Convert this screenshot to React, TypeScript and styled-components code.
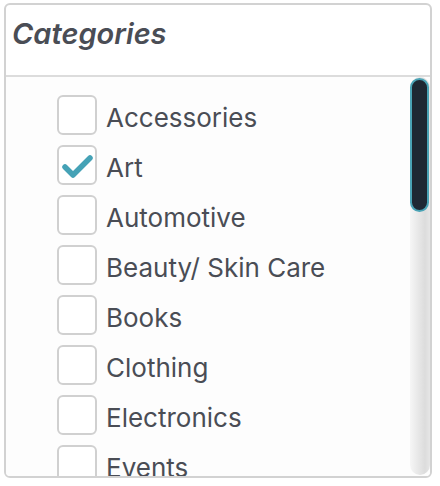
import React, { useState } from 'react';
import styled, { createGlobalStyle } from 'styled-components';

const Global = createGlobalStyle`
  html, body {
    margin: 0;
    padding: 0;
    background: #ffffff;
  }
  body {
    font-family: Inter, "Liberation Sans", sans-serif;
  }
`;

const Panel = styled.div`
  box-sizing: border-box;
  margin: 3px 0 0 4px;
  width: 428px;
  height: 475px;
  border: 2px solid #d2d2d2;
  border-radius: 6px;
  display: flex;
  flex-direction: column;
  overflow: hidden;
  background: #fff;
`;

const Header = styled.div`
  height: 72px;
  flex-shrink: 0;
  border-bottom: 2px solid #dcdcdc;
  padding: 12px 0 0 6px;
  box-sizing: border-box;
`;

const Title = styled.h2`
  margin: 0;
  font-size: 29px;
  font-weight: 600;
  font-style: italic;
  color: #4a4d55;
  line-height: 34px;
`;

const Body = styled.div`
  position: relative;
  flex: 1;
  min-height: 0;
`;

const List = styled.div`
  height: 100%;
  box-sizing: border-box;
  overflow-y: scroll;
  scrollbar-width: none;
  background: #fdfdfd;
  padding: 18px 0 10px 51px;
  display: flex;
  flex-direction: column;
  gap: 10px;

  &::-webkit-scrollbar {
    display: none;
  }
`;

const Track = styled.div`
  position: absolute;
  top: 0;
  right: 0;
  bottom: 1px;
  width: 20px;
  border-radius: 10px;
  background: linear-gradient(to right, #f6f6f6, #dcdcdc 75%, #e6e6e6);
`;

const Thumb = styled.div`
  position: absolute;
  left: 0;
  right: 1px;
  box-sizing: border-box;
  background: #1e2833;
  border: 2px solid #4aa3b5;
  border-radius: 10px;
`;

const Row = styled.label`
  display: flex;
  align-items: center;
  gap: 9px;
  height: 40px;
  flex-shrink: 0;
  cursor: pointer;
`;

const Box = styled.span`
  box-sizing: border-box;
  width: 40px;
  height: 40px;
  border: 2px solid #d0d0d0;
  border-radius: 6px;
  background: #fff;
  display: flex;
  align-items: center;
  justify-content: center;
  flex-shrink: 0;
`;

const Label = styled.span`
  font-size: 26px;
  color: #4a4d55;
  line-height: 30px;
  padding-top: 5px;
`;

const categories = [
  'Accessories', 'Art', 'Automotive', 'Beauty/ Skin Care', 'Books', 'Clothing',
  'Electronics', 'Events', 'Food & Drink', 'Furniture', 'Games', 'Health',
  'Home & Garden', 'Jewelry', 'Kids', 'Music', 'Office Supplies', 'Outdoors',
  'Pets', 'Photography', 'Sports', 'Tools', 'Toys', 'Travel',
];

const Check = () => (
  <svg width="34" height="34" viewBox="0 0 34 34">
    <polyline points="5,19 13,27 30,10" fill="none" stroke="#45a2b6" strokeWidth="5.5" strokeLinecap="round" strokeLinejoin="round" />
  </svg>
);

export default function App() {
  const [checked, setChecked] = useState<string[]>(['Art']);

  const toggle = (c: string) => {
    setChecked(curr => curr.includes(c) ? curr.filter(x => x !== c) : [...curr, c]);
  };

  return (
    <>
      <Global />
      <Panel>
        <Header>
          <Title>Categories</Title>
        </Header>
        <Body>
          <List>
            {categories.map(c => (
              <Row key={c} onClick={() => toggle(c)}>
                <Box>{checked.includes(c) && <Check />}</Box>
                <Label>{c}</Label>
              </Row>
            ))}
          </List>
          <Track>
            <Thumb style={{ top: 1, height: 134 }} />
          </Track>
        </Body>
      </Panel>
    </>
  );
}
